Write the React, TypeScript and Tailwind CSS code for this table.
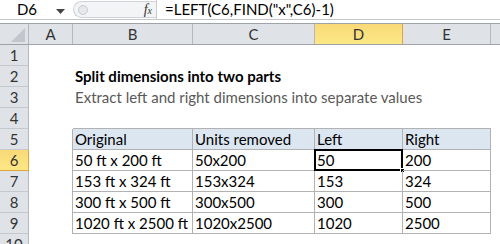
import React from 'react';

const cols = [
  { key: 'A', w: 'w-[44px]' },
  { key: 'B', w: 'w-[120px]' },
  { key: 'C', w: 'w-[122px]' },
  { key: 'D', w: 'w-[88px]' },
  { key: 'E', w: 'w-[88px]' },
];

const tableRows: string[][] = [
  ['Original', 'Units removed', 'Left', 'Right'],
  ['50 ft x 200 ft', '50x200', '50', '200'],
  ['153 ft x 324 ft', '153x324', '153', '324'],
  ['300 ft x 500 ft', '300x500', '300', '500'],
  ['1020 ft x 2500 ft', '1020x2500', '1020', '2500'],
];

const activeCol = 'D';
const activeRow = 6;

const FormulaBar = () => (
  <div className="flex h-[20px] items-center border-b border-[#c3c6cb] bg-white">
    <div className="relative flex h-full w-[73px] shrink-0 items-center">
      <span className="w-[54px] text-center text-[15px] text-black">D6</span>
      <svg width="9" height="5" viewBox="0 0 9 5" className="absolute left-[56px] top-[9px]">
        <path d="M0 0h9L4.5 5z" fill="#444" />
      </svg>
    </div>
    <div className="relative flex h-[17px] w-[83px] shrink-0 items-center justify-end rounded-l-full border border-r-0 border-[#cfd2d6] bg-[#f3f4f5] pr-[4px]">
      <span className="absolute left-[4px] top-[3px] h-[10px] w-[10px] rounded-full border border-[#c8cbcf] bg-[#e6e8ea]" />
      <span className="font-['Liberation_Serif',serif] text-[14px] italic text-[#333]">
        f<span className="text-[10px]">x</span>
      </span>
    </div>
    <div className="h-full w-px bg-[#c9ccd0]" />
    <span className="pl-[8px] text-[15px] text-black">=LEFT(C6,FIND("x",C6)-1)</span>
  </div>
);

const ColumnHeaders = () => (
  <div className="flex h-[22px] border-t border-b border-[#9ea3aa] bg-[#dfe3e8]">
    <div className="relative w-[29px] shrink-0 border-r border-[#b4b8be]">
      <svg width="14" height="14" viewBox="0 0 14 14" className="absolute bottom-[2px] right-[3px]">
        <path d="M14 0V14H0z" fill="#c2c6cc" />
      </svg>
    </div>
    {cols.map((c) => (
      <div
        key={c.key}
        className={`${c.w} flex shrink-0 items-center justify-center border-r text-[15px] ${
          c.key === activeCol
            ? 'border-[#e0a33f] bg-gradient-to-b from-[#f9d978] to-[#fde885] text-[#333]'
            : 'border-[#b4b8be] text-[#333]'
        }`}
      >
        {c.key}
      </div>
    ))}
    <div className="flex-1" />
  </div>
);

const RowHeader = ({ n }: { n: number }) => (
  <div
    className={`flex w-[29px] shrink-0 items-center justify-center border-r border-b text-[15px] text-[#333] ${
      n === activeRow
        ? 'border-[#e0a33f] bg-gradient-to-b from-[#f9d978] to-[#fde885]'
        : 'border-[#b4b8be] border-b-[#c5c9ce] bg-[#dfe3e8]'
    }`}
  >
    {n}
  </div>
);

export default function App() {
  const rowNums = [1, 2, 3, 4, 5, 6, 7, 8, 9, 10];

  return (
    <div className="h-[244px] w-[500px] overflow-hidden bg-white font-['Lato','Noto_Sans',sans-serif]">
      <FormulaBar />
      <div className="h-[3px]" />
      <ColumnHeaders />
      {rowNums.map((n) => {
        const data = n >= 5 && n <= 9 ? tableRows[n - 5] : null;
        return (
          <div key={n} className="flex h-[21px]">
            <RowHeader n={n} />
            {/* column A sits left of the table */}
            <div className={`w-[44px] shrink-0 ${data ? 'border-r border-[#b2b2b2]' : ''} ${n === 4 ? 'border-b border-transparent' : ''}`} />
            {data ? (
              data.map((v, i) => {
                const isActive = n === activeRow && i === 2;
                return (
                  <div
                    key={i}
                    className={`${cols[i + 1].w} relative flex shrink-0 items-center border-r border-b border-[#b2b2b2] pl-[2px] text-[15px] text-black ${
                      n === 5 ? 'bg-[#dce6f1]' : ''
                    }`}
                  >
                    {v}
                    {isActive && (
                      <>
                        <span className="pointer-events-none absolute -left-px -top-px bottom-[-1px] right-[-1px] border-2 border-black" />
                        <span className="absolute bottom-[-3px] right-[-3px] h-[5px] w-[5px] border border-white bg-black" />
                      </>
                    )}
                  </div>
                );
              })
            ) : (
              <div className={`relative flex flex-1 items-center ${n === 4 ? '' : ''}`}>
                {n === 4 && (
                  <div className="absolute bottom-0 left-0 h-px w-[418px] bg-[#b2b2b2]" />
                )}
                {n === 2 && (
                  <span className="pl-[2px] text-[15px] font-bold text-black">Split dimensions into two parts</span>
                )}
                {n === 3 && (
                  <span className="pl-[2px] text-[15px] text-[#595959]">
                    Extract left and right dimensions into separate values
                  </span>
                )}
              </div>
            )}
          </div>
        );
      })}
    </div>
  );
}
